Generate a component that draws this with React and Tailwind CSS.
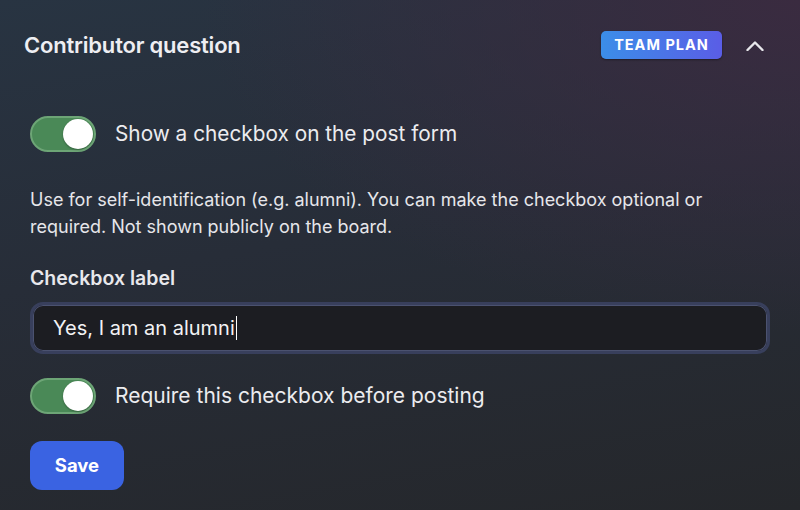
import React from "react";

function Toggle() {
  return (
    <div className="relative w-[66px] h-[36px] rounded-full bg-[#4a8957] border-2 border-[#6da576] shrink-0">
      <div className="absolute right-[1px] top-[1px] w-[30px] h-[30px] rounded-full bg-white shadow-[0_1px_2px_rgba(0,0,0,0.3)]" />
    </div>
  );
}

export default function App() {
  return (
    <div
      className="w-[800px] h-[510px] overflow-hidden text-[#ececef] bg-[radial-gradient(ellipse_75%_65%_at_100%_0%,#3a2b40_0%,rgba(58,43,64,0)_100%),linear-gradient(170deg,#283442_0%,#272d38_45%,#25272b_100%)]"
      style={{ fontFamily: "Inter, 'Noto Sans', sans-serif" }}
    >
      <div className="flex items-center justify-between pl-6 pr-[36px] pt-[31px] h-[59px]">
        <div className="text-[22px] font-semibold leading-[28px] tracking-[-0.2px] text-[#eeeef2]">
          Contributor question
        </div>
        <div className="flex items-center gap-6">
          <div className="h-[28px] w-[121px] flex items-center justify-center rounded-[5px] bg-[linear-gradient(90deg,#3b8ee8,#5a5de6)] text-white text-[14.5px] font-bold tracking-[1px] shadow-[0_1px_2px_rgba(0,0,0,0.4)]">
            TEAM PLAN
          </div>
          <svg width="18" height="10" viewBox="0 0 18 10" className="mt-[1px]">
            <polyline points="1.5,9 9,1.5 16.5,9" fill="none" stroke="#e8e8ec" strokeWidth="2.4" strokeLinecap="round" strokeLinejoin="round" />
          </svg>
        </div>
      </div>

      <div className="px-[30px] pt-[57px] flex flex-col">
        <div className="flex items-center gap-[19px]">
          <Toggle />
          <span className="text-[20.8px] leading-[28px] text-[#ececef]">Show a checkbox on the post form</span>
        </div>

        <p className="mt-[34px] text-[18px] leading-[27px] text-[#e6e6ea]">
          Use for self-identification (e.g. alumni). You can make the checkbox optional or
          <br />
          required. Not shown publicly on the board.
        </p>

        <div className="mt-[26px] text-[19.5px] leading-[24px] font-semibold text-[#e8e8ec]">Checkbox label</div>

        <div className="mt-[12px] h-[52px] rounded-[13px] border-[3px] border-[#383f5c] bg-[#1c1d22] flex items-center pl-[20px] shadow-[inset_0_0_0_1px_#4b5270]">
          <span className="text-[20px] text-[#f2f2f4] leading-[28px]">Yes, I am an alumni</span>
          <span className="w-[1.5px] h-[24px] bg-white ml-[1px]" />
        </div>

        <div className="mt-[24px] flex items-center gap-[19px]">
          <Toggle />
          <span className="text-[21px] leading-[28px] text-[#ececef]">Require this checkbox before posting</span>
        </div>

        <button className="mt-[27px] w-[94px] h-[49px] rounded-[12px] bg-[#3a63e2] text-white text-[18.5px] font-bold">
          Save
        </button>
      </div>
    </div>
  );
}
